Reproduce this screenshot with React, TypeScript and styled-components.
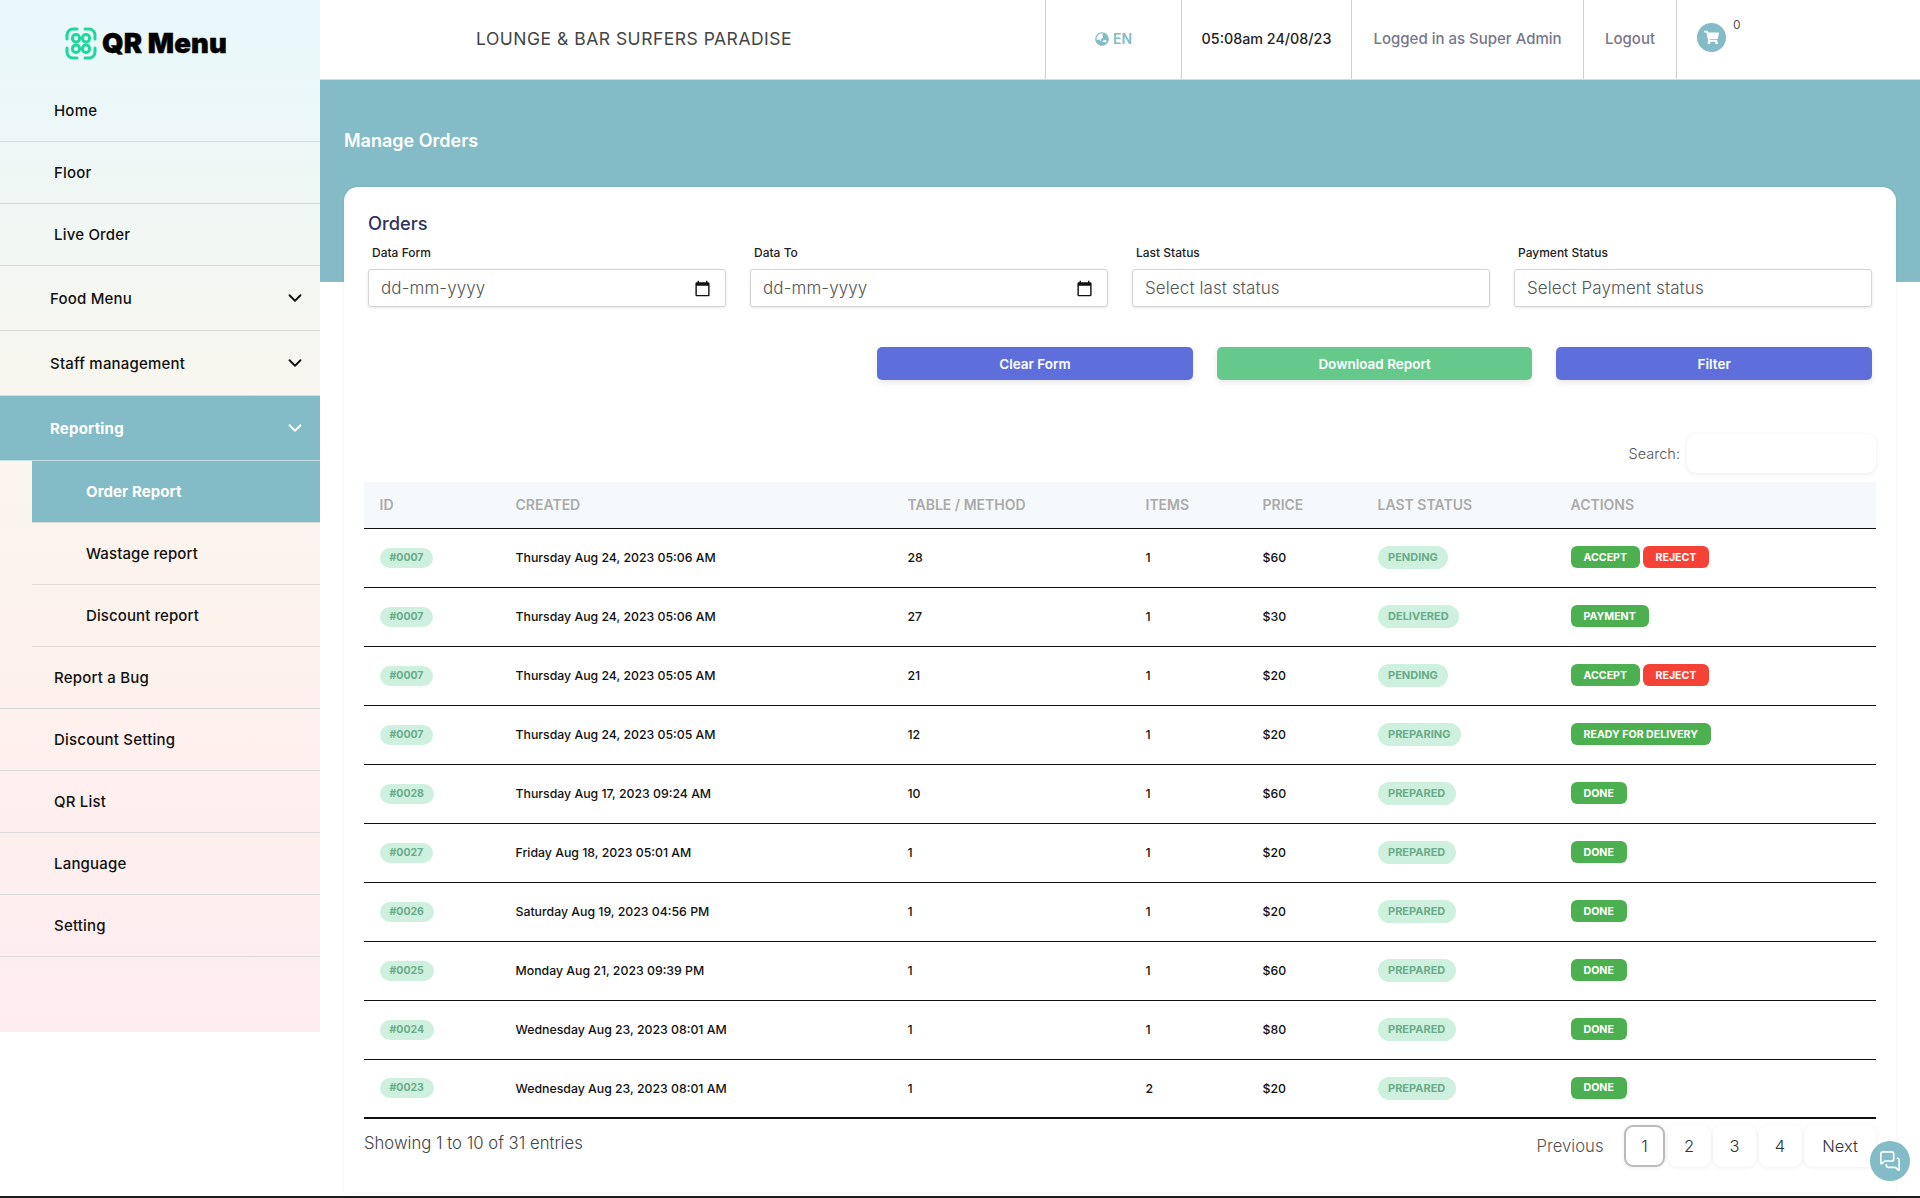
import styled, { createGlobalStyle } from 'styled-components';
import { ChevronDown, MessagesSquare } from 'lucide-react';
import { FaGlobeAsia, FaShoppingCart } from 'react-icons/fa';

const TEAL = '#83bcc6';

const GlobalStyle = createGlobalStyle`
  html, body {
    margin: 0;
    padding: 0;
    background: #fff;
  }

  * {
    box-sizing: border-box;
  }

  body {
    font-family: Inter, "Open Sans", "Liberation Sans", sans-serif;
    color: #111;
  }
`;

const orders = [
  { id: '#0007', created: 'Thursday Aug 24, 2023 05:06 AM', table: '28', items: 1, price: '$60', status: 'PENDING', actions: ['ACCEPT', 'REJECT'] },
  { id: '#0007', created: 'Thursday Aug 24, 2023 05:06 AM', table: '27', items: 1, price: '$30', status: 'DELIVERED', actions: ['PAYMENT'] },
  { id: '#0007', created: 'Thursday Aug 24, 2023 05:05 AM', table: '21', items: 1, price: '$20', status: 'PENDING', actions: ['ACCEPT', 'REJECT'] },
  { id: '#0007', created: 'Thursday Aug 24, 2023 05:05 AM', table: '12', items: 1, price: '$20', status: 'PREPARING', actions: ['READY FOR DELIVERY'] },
  { id: '#0028', created: 'Thursday Aug 17, 2023 09:24 AM', table: '10', items: 1, price: '$60', status: 'PREPARED', actions: ['DONE'] },
  { id: '#0027', created: 'Friday Aug 18, 2023 05:01 AM', table: '1', items: 1, price: '$20', status: 'PREPARED', actions: ['DONE'] },
  { id: '#0026', created: 'Saturday Aug 19, 2023 04:56 PM', table: '1', items: 1, price: '$20', status: 'PREPARED', actions: ['DONE'] },
  { id: '#0025', created: 'Monday Aug 21, 2023 09:39 PM', table: '1', items: 1, price: '$60', status: 'PREPARED', actions: ['DONE'] },
  { id: '#0024', created: 'Wednesday Aug 23, 2023 08:01 AM', table: '1', items: 1, price: '$80', status: 'PREPARED', actions: ['DONE'] },
  { id: '#0023', created: 'Wednesday Aug 23, 2023 08:01 AM', table: '1', items: 2, price: '$20', status: 'PREPARED', actions: ['DONE'] },
];

const columns = [
  { label: 'ID', width: 136 },
  { label: 'Created', width: 392 },
  { label: 'Table / Method', width: 238 },
  { label: 'Items', width: 117 },
  { label: 'Price', width: 115 },
  { label: 'Last Status', width: 193 },
  { label: 'Actions', width: 321 },
];

const LogoMark = () => (
  <svg width="32" height="33" viewBox="0 0 32 33" fill="none" stroke="#1fd79b" strokeWidth="3">
    <rect x="7.5" y="7.5" width="7" height="7.5" rx="3.2" />
    <rect x="17.5" y="7.5" width="7" height="7.5" rx="3.2" />
    <rect x="7.5" y="18" width="7" height="7.5" rx="3.2" />
    <rect x="17.5" y="18" width="7" height="7.5" rx="3.2" />
    <path d="M2 12V8a6 6 0 0 1 6-6h4" strokeLinecap="round" />
    <path d="M20 2h4a6 6 0 0 1 6 6v4" strokeLinecap="round" />
    <path d="M2 21v4a6 6 0 0 0 6 6h4" strokeLinecap="round" />
    <path d="M20 31h4a6 6 0 0 0 6-6v-4" strokeLinecap="round" />
  </svg>
);

const CalendarGlyph = () => (
  <svg width="17" height="17" viewBox="0 0 24 24" fill="#111">
    <path d="M20 3h-1V1h-2v2H7V1H5v2H4c-1.1 0-2 .9-2 2v16c0 1.1.9 2 2 2h16c1.1 0 2-.9 2-2V5c0-1.1-.9-2-2-2zm0 18H4V8h16v13z" />
  </svg>
);

const Sidebar = () => (
  <Side>
    <LogoRow>
      <LogoMark />
      <LogoText>QR Menu</LogoText>
    </LogoRow>
    <NavItem>Home</NavItem>
    <NavItem>Floor</NavItem>
    <NavItem>Live Order</NavItem>
    <NavGroup>
      Food Menu
      <ChevronDown size={22} />
    </NavGroup>
    <NavGroup>
      Staff management
      <ChevronDown size={22} />
    </NavGroup>
    <NavGroup $active>
      Reporting
      <ChevronDown size={22} />
    </NavGroup>
    <SubNav>
      <SubItem $active>Order Report</SubItem>
      <SubItem>Wastage report</SubItem>
      <SubItem>Discount report</SubItem>
    </SubNav>
    <NavItem>Report a Bug</NavItem>
    <NavItem>Discount Setting</NavItem>
    <NavItem>QR List</NavItem>
    <NavItem>Language</NavItem>
    <NavItem>Setting</NavItem>
  </Side>
);

const TopBar = () => (
  <Header>
    <VenueName>LOUNGE &amp; BAR SURFERS PARADISE</VenueName>
    <HeaderCell $w={136} $color={TEAL} $weight={600} $size={14}>
      <FaGlobeAsia size={14} />
      EN
    </HeaderCell>
    <HeaderCell $w={170} $color="#222" $size={14.3}>
      05:08am 24/08/23
    </HeaderCell>
    <HeaderCell $w={232} $color="#77778a" $size={15}>
      Logged in as Super Admin
    </HeaderCell>
    <HeaderCell $w={93} $color="#77778a" $size={15}>
      Logout
    </HeaderCell>
    <CartArea>
      <CartBubble>
        <FaShoppingCart size={15} />
      </CartBubble>
      <CartCount>0</CartCount>
    </CartArea>
  </Header>
);

const Filters = () => (
  <>
    <FilterGrid>
      <Field>
        <FieldLabel>Data Form</FieldLabel>
        <InputShell>
          <TextInput placeholder="dd-mm-yyyy" />
          <CalendarGlyph />
        </InputShell>
      </Field>
      <Field>
        <FieldLabel>Data To</FieldLabel>
        <InputShell>
          <TextInput placeholder="dd-mm-yyyy" />
          <CalendarGlyph />
        </InputShell>
      </Field>
      <Field>
        <FieldLabel>Last Status</FieldLabel>
        <InputShell>
          <TextInput placeholder="Select last status" />
        </InputShell>
      </Field>
      <Field>
        <FieldLabel>Payment Status</FieldLabel>
        <InputShell>
          <TextInput placeholder="Select Payment status" />
        </InputShell>
      </Field>
    </FilterGrid>
    <ButtonRow>
      <FormButton $bg="#5e6fdc">Clear Form</FormButton>
      <FormButton $bg="#65c98c">Download Report</FormButton>
      <FormButton $bg="#5e6fdc">Filter</FormButton>
    </ButtonRow>
  </>
);

const OrdersTable = () => (
  <Table>
    <colgroup>
      {columns.map((col) => (
        <Col key={col.label} $w={col.width} />
      ))}
    </colgroup>
    <thead>
      <tr>
        {columns.map((col) => (
          <HeadCell key={col.label}>{col.label}</HeadCell>
        ))}
      </tr>
    </thead>
    <tbody>
      {orders.map((order, index) => (
        <Row key={index}>
          <Cell>
            <IdBadge>{order.id}</IdBadge>
          </Cell>
          <Cell>{order.created}</Cell>
          <Cell>{order.table}</Cell>
          <Cell>{order.items}</Cell>
          <Cell>{order.price}</Cell>
          <Cell>
            <StatusPill>{order.status}</StatusPill>
          </Cell>
          <Cell>
            <ActionGroup>
              {order.actions.map((action) => (
                <ActionButton key={action} $danger={action === 'REJECT'}>
                  {action}
                </ActionButton>
              ))}
            </ActionGroup>
          </Cell>
        </Row>
      ))}
    </tbody>
  </Table>
);

const App = () => (
  <>
    <GlobalStyle />
    <Page>
      <Sidebar />
      <Main>
        <TopBar />
        <Content>
          <PageTitle>Manage Orders</PageTitle>
          <Card>
            <CardTitle>Orders</CardTitle>
            <Filters />
            <SearchRow>
              <SearchLabel>Search:</SearchLabel>
              <SearchInput />
            </SearchRow>
            <OrdersTable />
            <TableFooter>
              <EntriesText>Showing 1 to 10 of 31 entries</EntriesText>
              <Pagination>
                <PagePlain>Previous</PagePlain>
                <PageButton $active>1</PageButton>
                <PageButton>2</PageButton>
                <PageButton>3</PageButton>
                <PageButton>4</PageButton>
                <PageButton $wide>Next</PageButton>
              </Pagination>
            </TableFooter>
          </Card>
        </Content>
      </Main>
      <ChatFab>
        <MessagesSquare size={22} strokeWidth={1.8} />
      </ChatFab>
    </Page>
  </>
);

const Page = styled.div`
  display: grid;
  grid-template-columns: 320px 1fr;
  align-items: start;
  height: 1198px;
  overflow: hidden;
  border-bottom: 2px solid #1c1c1c;
`;

const Side = styled.aside`
  height: 1032px;
  display: flex;
  flex-direction: column;
  background: linear-gradient(180deg, #e8f8fb 0%, #f9f6ee 40%, #fdf2ec 60%, #feecf1 100%);
`;

const LogoRow = styled.div`
  height: 80px;
  flex: none;
  display: flex;
  align-items: center;
  gap: 5px;
  padding: 6px 0 0 65px;
`;

const LogoText = styled.span`
  font-size: 27.5px;
  font-weight: 900;
  letter-spacing: 0.1px;
  color: #000;
  -webkit-text-stroke: 0.4px #000;
`;

const NavItem = styled.div`
  height: 62px;
  flex: none;
  display: flex;
  align-items: center;
  padding: 0 0 1px 54px;
  border-bottom: 1px solid #d9d9d9;
  font-size: 15px;
  font-weight: 500;
  letter-spacing: 0.2px;
  color: #111;
`;

const NavGroup = styled.div<{ $active?: boolean }>`
  height: 65px;
  flex: none;
  display: flex;
  align-items: center;
  justify-content: space-between;
  padding: 0 14px 0 50px;
  border-bottom: 1px solid ${(p) => (p.$active ? '#c4e0e5' : '#d9d9d9')};
  background: ${(p) => (p.$active ? TEAL : 'transparent')};
  color: ${(p) => (p.$active ? '#fff' : '#111')};
  font-size: 15px;
  font-weight: ${(p) => (p.$active ? 700 : 500)};
  letter-spacing: 0.2px;
`;

const SubNav = styled.div`
  display: flex;
  flex-direction: column;
  padding-left: 32px;
`;

const SubItem = styled.div<{ $active?: boolean }>`
  height: 62px;
  display: flex;
  align-items: center;
  padding: 0 0 1px 54px;
  border-bottom: 1px solid #dcdcdc;
  background: ${(p) => (p.$active ? TEAL : 'transparent')};
  color: ${(p) => (p.$active ? '#fff' : '#111')};
  font-size: 15px;
  font-weight: ${(p) => (p.$active ? 700 : 500)};
  letter-spacing: 0.1px;
`;

const Main = styled.main`
  display: flex;
  flex-direction: column;
  min-width: 0;
`;

const Header = styled.header`
  height: 80px;
  flex: none;
  display: flex;
  align-items: stretch;
  border-bottom: 1px solid #d8d8d8;
  background: #fff;
`;

const VenueName = styled.div`
  width: 725px;
  display: flex;
  align-items: center;
  padding: 0 0 2px 156px;
  font-size: 17.5px;
  letter-spacing: 0.5px;
  color: #444;
`;

const HeaderCell = styled.div<{ $w: number; $color: string; $size: number; $weight?: number }>`
  width: ${(p) => p.$w}px;
  display: flex;
  align-items: center;
  justify-content: center;
  gap: 4px;
  padding-bottom: 2px;
  border-left: 1px solid #d0d0d0;
  font-size: ${(p) => p.$size}px;
  font-weight: ${(p) => p.$weight ?? 500};
  color: ${(p) => p.$color};
`;

const CartArea = styled.div`
  flex: 1;
  display: flex;
  align-items: flex-start;
  gap: 7px;
  padding: 23px 0 0 20px;
  border-left: 1px solid #d0d0d0;
`;

const CartBubble = styled.div`
  width: 29px;
  height: 29px;
  border-radius: 50%;
  background: ${TEAL};
  color: #fff;
  display: flex;
  align-items: center;
  justify-content: center;
`;

const CartCount = styled.span`
  margin-top: -6px;
  font-size: 12px;
  color: #555;
`;

const Content = styled.div`
  padding: 0 24px;
  background: linear-gradient(180deg, ${TEAL} 202px, #fff 202px);
`;

const PageTitle = styled.h1`
  height: 107px;
  margin: 0;
  display: flex;
  align-items: center;
  padding-top: 13px;
  font-size: 18px;
  font-weight: 600;
  color: #fff;
`;

const Card = styled.section`
  height: 1006px;
  padding: 24px 24px 0;
  background: #fff;
  border-radius: 14px 14px 0 0;
  box-shadow: 0 0 3px rgba(0, 0, 0, 0.08);
`;

const CardTitle = styled.h2`
  margin: 0 0 10px;
  font-size: 18.3px;
  line-height: 24px;
  font-weight: 500;
  color: #32325d;
`;

const FilterGrid = styled.div`
  display: grid;
  grid-template-columns: repeat(4, 1fr);
  gap: 24px;
`;

const Field = styled.label`
  display: flex;
  flex-direction: column;
`;

const FieldLabel = styled.span`
  height: 24px;
  padding-left: 4px;
  font-size: 12px;
  font-weight: 500;
  line-height: 16px;
  color: #222;
`;

const InputShell = styled.div`
  height: 38px;
  display: flex;
  align-items: center;
  padding: 0 14px 0 12px;
  border: 1px solid #d5d5d5;
  border-radius: 3px;
  box-shadow: 0 1px 3px rgba(50, 50, 93, 0.12);
  background: #fff;
`;

const TextInput = styled.input`
  flex: 1;
  min-width: 0;
  border: 0;
  outline: 0;
  padding: 0 0 1px;
  font-family: inherit;
  font-size: 17px;
  font-weight: 300;
  letter-spacing: 0.1px;
  background: transparent;

  &::placeholder {
    color: #555;
    opacity: 1;
  }
`;

const ButtonRow = styled.div`
  display: flex;
  justify-content: flex-end;
  gap: 24px;
  margin-top: 40px;
`;

const FormButton = styled.button<{ $bg: string }>`
  width: 315.6px;
  height: 33px;
  border: 0;
  border-radius: 5px;
  background: ${(p) => p.$bg};
  color: #fff;
  font-family: inherit;
  font-size: 13.5px;
  font-weight: 600;
  box-shadow: 0 3px 6px rgba(50, 50, 93, 0.1);
`;

const SearchRow = styled.div`
  display: flex;
  justify-content: flex-end;
  align-items: center;
  gap: 7px;
  margin: 54px -4px 9px 0;
`;

const SearchLabel = styled.span`
  font-size: 14.5px;
  font-weight: 300;
  color: #555;
`;

const SearchInput = styled.input`
  width: 189px;
  height: 39px;
  border: 0;
  outline: 0;
  border-radius: 9px;
  background: #fff;
  box-shadow: 0 1px 4px rgba(50, 50, 93, 0.1);
`;

const Table = styled.table`
  width: calc(100% + 8px);
  margin: 0 -4px;
  table-layout: fixed;
  border-collapse: collapse;
`;

const Col = styled.col<{ $w: number }>`
  width: ${(p) => p.$w}px;
`;

const HeadCell = styled.th`
  height: 46px;
  padding: 0 0 0 15.5px;
  background: #f6f9fc;
  border-bottom: 1px solid #111;
  text-align: left;
  text-transform: uppercase;
  font-size: 14px;
  font-weight: 600;
  color: #aaa;
`;

const Row = styled.tr`
  height: 59px;
  border-bottom: 1px solid #111;

  &:last-child {
    border-bottom-width: 2px;
  }
`;

const Cell = styled.td`
  padding: 0 0 0 15.5px;
  font-size: 12.3px;
  font-weight: 500;
  color: #111;
`;

const IdBadge = styled.span`
  display: inline-block;
  height: 20px;
  line-height: 20px;
  padding: 0 10px;
  border-radius: 10px;
  background: #cef1df;
  color: #6bab88;
  font-size: 10.5px;
  font-weight: 700;
`;

const StatusPill = styled.span`
  display: inline-block;
  height: 23px;
  line-height: 23px;
  padding: 0 10.5px;
  border-radius: 12px;
  background: #cef1df;
  color: #6bab88;
  font-size: 11px;
  font-weight: 700;
`;

const ActionGroup = styled.div`
  display: flex;
  gap: 2.5px;
  margin-top: -1px;
`;

const ActionButton = styled.button<{ $danger?: boolean }>`
  height: 22px;
  padding: 0 13px;
  border: 0;
  border-radius: 6px;
  background: ${(p) => (p.$danger ? '#f44336' : '#4caf50')};
  color: #fff;
  font-family: inherit;
  font-size: 10.6px;
  font-weight: 700;
`;

const TableFooter = styled.div`
  display: flex;
  justify-content: space-between;
  align-items: flex-start;
  margin-right: -4px;
  margin-left: -4px;
  padding-top: 6px;
`;

const EntriesText = styled.span`
  padding-top: 6px;
  font-size: 16.7px;
  line-height: 24px;
  font-weight: 300;
  color: #444;
`;

const Pagination = styled.nav`
  display: flex;
  align-items: center;
  gap: 2.5px;
`;

const PagePlain = styled.span`
  margin-right: 18px;
  font-size: 16.7px;
  font-weight: 300;
  color: #555;
`;

const PageButton = styled.button<{ $active?: boolean; $wide?: boolean }>`
  width: ${(p) => (p.$active ? 41 : p.$wide ? 72 : 43)}px;
  height: 42px;
  border: ${(p) => (p.$active ? '2px solid #bbb' : '0')};
  border-radius: 9px;
  background: #fff;
  box-shadow: 0 1px 4px rgba(50, 50, 93, 0.08);
  font-family: inherit;
  font-size: 16.5px;
  font-weight: 300;
  color: #333;
`;

const ChatFab = styled.div`
  position: fixed;
  right: 10px;
  bottom: 17px;
  width: 40px;
  height: 40px;
  border-radius: 50%;
  background: ${TEAL};
  color: #fff;
  display: flex;
  align-items: center;
  justify-content: center;
`;

export default App;
